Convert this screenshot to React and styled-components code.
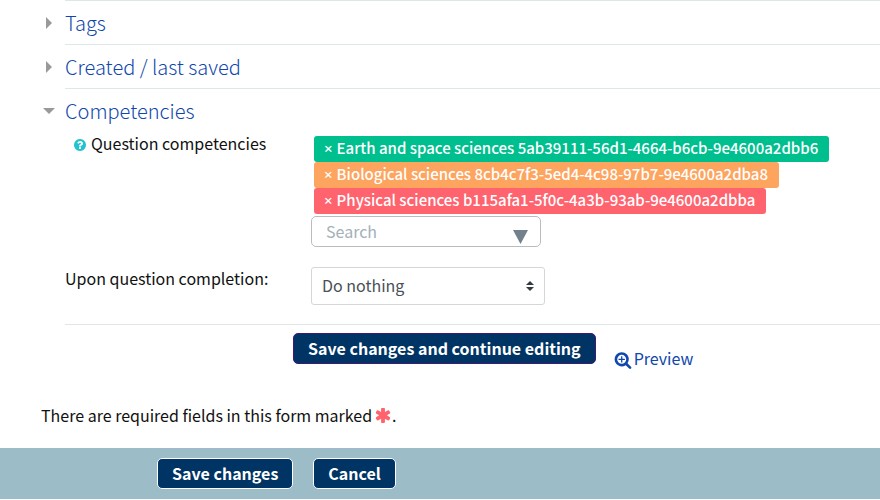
import React, { useState } from "react";
import styled, { createGlobalStyle } from "styled-components";

const GlobalStyle = createGlobalStyle`
  * { box-sizing: border-box; }
  body {
    margin: 0;
    background: #fff;
    color: #111;
    font-family: "Noto Sans CJK SC", "Noto Sans", sans-serif;
    font-size: 16px;
    font-weight: 400;
    line-height: 22px;
  }
  button, input, select { font: inherit; }
`;

const Form = styled.form`
  display: flex;
  flex-direction: column;
`;

const Section = styled.section`
  margin-left: 65px;
  border-top: 1px solid #dee6e8;
`;

const SectionTitle = styled.h3`
  margin: 0;
  height: 43px;
  display: flex;
  align-items: center;
  font-size: 20px;
  font-weight: 300;
`;

const Toggle = styled.button`
  display: flex;
  align-items: center;
  gap: 10px;
  margin-left: -22px;
  padding: 0;
  border: 0;
  background: none;
  color: #0f47ad;
  cursor: pointer;
`;

const Arrow = styled.svg`
  width: 12px;
  height: 12px;
  fill: #999;
`;

const FieldRow = styled.div`
  display: grid;
  grid-template-columns: 246px 1fr;
  align-items: start;
  margin-bottom: 20px;
`;

const Label = styled.label`
  display: flex;
  align-items: center;
  color: #111;
`;

const HelpButton = styled.button`
  display: flex;
  margin: 4px 4px 0 8px;
  padding: 0;
  border: 0;
  background: none;
  color: #22c3d0;
  cursor: pointer;
`;

const Glyph = styled.svg`
  width: ${(p) => p.$size}px;
  height: ${(p) => p.$size}px;
  flex: none;
  fill: currentColor;
`;

const Picker = styled.div`
  display: flex;
  flex-direction: column;
  align-items: flex-start;
  padding-top: 4px;
`;

const Tag = styled.button`
  display: flex;
  gap: 4px;
  height: 26px;
  margin-left: 3px;
  padding: 1px 11px 0 10px;
  border: 0;
  border-radius: 3px;
  background: ${(p) => p.$color};
  color: #fff;
  font-size: 15px;
  font-weight: 500;
  white-space: nowrap;
  cursor: pointer;
`;

const Cross = styled.span`
  font-family: "Noto Sans", sans-serif;
`;

const SearchBox = styled.div`
  display: flex;
  align-items: center;
  width: 230px;
  height: 31px;
  margin-top: 2px;
  border: 1px solid #b9bdc0;
  border-radius: 5px;
`;

const SearchInput = styled.input`
  flex: 1;
  min-width: 0;
  height: 29px;
  padding: 0 0 2px 14px;
  border: 0;
  outline: 0;
  background: none;
  &::placeholder { color: #a3b0b8; opacity: 1; }
`;

const DropButton = styled.button`
  display: flex;
  margin: 10px 12px 0 0;
  padding: 0;
  border: 0;
  background: none;
  color: #73818c;
  cursor: pointer;
`;

const SelectBox = styled.div`
  display: grid;
  align-items: center;
  width: 234px;
  > * { grid-area: 1 / 1; }
  > svg { justify-self: end; margin-right: 11px; pointer-events: none; }
`;

const Select = styled.select`
  width: 100%;
  height: 38px;
  padding: 0 28px 2px 10px;
  appearance: none;
  border: 1px solid #d4d7d9;
  border-radius: 3px;
  background: #fff;
  color: #495057;
`;

const Actions = styled.div`
  display: flex;
  align-items: flex-start;
  gap: 18px;
  margin: -1px 0 0 65px;
  padding: 8px 0 0 228px;
  border-top: 1px solid #dee6e8;
`;

const Button = styled.button`
  height: 31px;
  padding: 0 14px 1px;
  border: 1px solid ${(p) => p.$border};
  border-radius: 5px;
  background: #003464;
  color: #fff;
  font-weight: 700;
  white-space: nowrap;
  cursor: pointer;
`;

const PreviewLink = styled.a`
  display: flex;
  align-items: center;
  gap: 2px;
  padding-top: 14px;
  color: #0f47ad;
  text-decoration: none;
  svg { margin-top: 3px; }
`;

const RequiredNote = styled.p`
  display: flex;
  align-items: center;
  margin: 35px 41px 22px;
`;

const Required = styled.span`
  display: flex;
  margin: 3px 0 0 2px;
  color: #ff636e;
`;

const Footer = styled.footer`
  display: flex;
  gap: 20px;
  padding: 10px 157px;
  background: #9cbcc7;
`;

const competencies = [
  { label: "Earth and space sciences 5ab39111-56d1-4664-b6cb-9e4600a2dbb6", color: "#00bf8f" },
  { label: "Biological sciences 8cb4c7f3-5ed4-4c98-97b7-9e4600a2dba8", color: "#fda45f" },
  { label: "Physical sciences b115afa1-5f0c-4a3b-93ab-9e4600a2dbba", color: "#ff636e" },
];

const icons = {
  help: "M1024 1376v-192q0-14-9-23t-23-9h-192q-14 0-23 9t-9 23v192q0 14 9 23t23 9h192q14 0 23-9t9-23zm256-672q0-88-55.5-163t-138.5-116-170-41q-243 0-371 213-15 24 8 42l132 100q7 6 19 6 16 0 25-12 53-68 86-92 34-24 86-24 48 0 85.5 26t37.5 59q0 38-20 61t-68 45q-63 28-115.5 86.5t-52.5 125.5v36q0 14 9 23t23 9h192q14 0 23-9t9-23q0-19 21.5-49.5t54.5-49.5q32-18 49-28.5t46-35 44.5-48 28-60.5 12.5-81zm384 192q0 209-103 385.5t-279.5 279.5-385.5 103-385.5-103-279.5-279.5-103-385.5 103-385.5 279.5-279.5 385.5-103 385.5 103 279.5 279.5 103 385.5z",
  zoom: "M1088 800v64q0 13-9.5 22.5t-22.5 9.5h-224v224q0 13-9.5 22.5t-22.5 9.5h-64q-13 0-22.5-9.5t-9.5-22.5v-224h-224q-13 0-22.5-9.5t-9.5-22.5v-64q0-13 9.5-22.5t22.5-9.5h224v-224q0-13 9.5-22.5t22.5-9.5h64q13 0 22.5 9.5t9.5 22.5v224h224q13 0 22.5 9.5t9.5 22.5zm128 32q0-185-131.5-316.5t-316.5-131.5-316.5 131.5-131.5 316.5 131.5 316.5 316.5 131.5 316.5-131.5 131.5-316.5zm512 832q0 53-37.5 90.5t-90.5 37.5q-54 0-90-38l-343-342q-179 124-399 124-143 0-273.5-55.5t-225-150-150-225-55.5-273.5 55.5-273.5 150-225 225-150 273.5-55.5 273.5 55.5 225 150 150 225 55.5 273.5q0 220-124 399l343 343q37 37 37 90z",
  asterisk: "M1546 886q46 26 59.5 77.5t-12.5 97.5l-64 110q-26 46-77.5 59.5t-97.5-12.5l-266-153v307q0 52-38 90t-90 38h-128q-52 0-90-38t-38-90v-307l-266 153q-46 26-97.5 12.5t-77.5-59.5l-64-110q-26-46-12.5-97.5t59.5-77.5l266-154-266-154q-46-26-59.5-77.5t12.5-97.5l64-110q26-46 77.5-59.5t97.5 12.5l266 153v-307q0-52 38-90t90-38h128q52 0 90 38t38 90v307l266-153q46-26 97.5-12.5t77.5 59.5l64 110q26 46 12.5 97.5t-59.5 77.5l-266 154z",
};

function Icon({ name, size }) {
  return (
    <Glyph $size={size} viewBox="0 0 1792 1792" aria-hidden="true">
      <path d={icons[name]} />
    </Glyph>
  );
}

function CollapsibleTitle({ children, open, onToggle }) {
  return (
    <SectionTitle>
      <Toggle type="button" aria-expanded={open} onClick={onToggle}>
        <Arrow viewBox="0 0 12 12" aria-hidden="true">
          <path d={open ? "M0 3h12L6 9z" : "M3 0v12l6-6z"} />
        </Arrow>
        {children}
      </Toggle>
    </SectionTitle>
  );
}

export default function App() {
  const [open, setOpen] = useState({ tags: false, saved: false, competencies: true });
  const [selected, setSelected] = useState(competencies);
  const toggle = (key) => setOpen({ ...open, [key]: !open[key] });

  return (
    <>
      <GlobalStyle />
      <Form onSubmit={(e) => e.preventDefault()}>
        <Section>
          <CollapsibleTitle open={open.tags} onToggle={() => toggle("tags")}>Tags</CollapsibleTitle>
        </Section>
        <Section>
          <CollapsibleTitle open={open.saved} onToggle={() => toggle("saved")}>Created / last saved</CollapsibleTitle>
        </Section>
        <Section>
          <CollapsibleTitle open={open.competencies} onToggle={() => toggle("competencies")}>Competencies</CollapsibleTitle>
          {open.competencies && (
            <>
              <FieldRow>
                <Label as="div">
                  <HelpButton type="button" aria-label="Help with Question competencies">
                    <Icon name="help" size={14} />
                  </HelpButton>
                  <label htmlFor="competency-search">Question competencies</label>
                </Label>
                <Picker>
                  {selected.map((c) => (
                    <Tag
                      key={c.label}
                      type="button"
                      $color={c.color}
                      onClick={() => setSelected(selected.filter((s) => s !== c))}
                    >
                      <Cross>×</Cross>
                      {c.label}
                    </Tag>
                  ))}
                  <SearchBox>
                    <SearchInput id="competency-search" type="text" placeholder="Search" />
                    <DropButton type="button" aria-label="Show suggestions">
                      <svg width="15" height="14" viewBox="0 0 15 14" fill="currentColor" aria-hidden="true">
                        <path d="M0 0h15L7.500 14z" />
                      </svg>
                    </DropButton>
                  </SearchBox>
                </Picker>
              </FieldRow>
              <FieldRow>
                <Label htmlFor="completion">Upon question completion:</Label>
                <SelectBox>
                  <Select id="completion" defaultValue="nothing">
                    <option value="nothing">Do nothing</option>
                    <option value="evidence">Attach evidence</option>
                    <option value="review">Send for review</option>
                    <option value="complete">Complete the competency</option>
                  </Select>
                  <svg width="8" height="10" viewBox="0 0 8 10" fill="#343a40" aria-hidden="true">
                    <path d="M4 0l4 4H0zM0 6h8l-4 4z" />
                  </svg>
                </SelectBox>
              </FieldRow>
            </>
          )}
        </Section>
        <Actions>
          <Button type="submit" $border="#3f1a70">Save changes and continue editing</Button>
          <PreviewLink href="#preview">
            <Icon name="zoom" size={18} />
            Preview
          </PreviewLink>
        </Actions>
        <RequiredNote>
          There are required fields in this form marked
          <Required role="img" aria-label="Required field">
            <Icon name="asterisk" size={18} />
          </Required>
          .
        </RequiredNote>
        <Footer>
          <Button type="submit" $border="#fff">Save changes</Button>
          <Button type="button" $border="#fff">Cancel</Button>
        </Footer>
      </Form>
    </>
  );
}
